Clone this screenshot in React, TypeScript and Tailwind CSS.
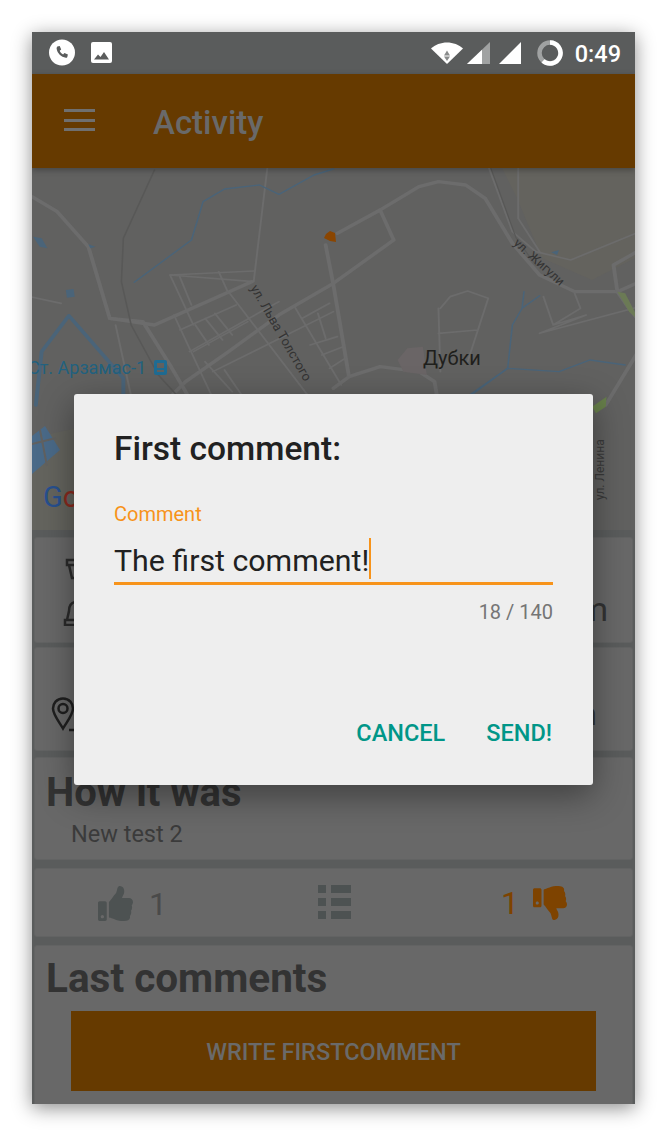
import React from "react";
import { FaThumbsUp, FaThumbsDown } from "react-icons/fa";

const StatusBar: React.FC = () => {
  return (
    <div className="h-[42px] bg-[#5a5c5c] flex items-center justify-between pl-[17px] pr-[14px] text-white">
      <div className="flex items-center gap-[16px] -mt-[1px]">
        <svg width="26" height="27" viewBox="0 0 26 27">
          <circle cx="13" cy="13.5" r="13" fill="#fff" />
          <path
            d="M8.3 7.5l2.4-.6 1.5 3.6-1.5 1.2c.7 1.6 1.9 2.9 3.4 3.7l1.3-1.5 3.5 1.6-.6 2.4c-.2.6-.7 1-1.4.9-4.8-.6-8.6-4.4-9.3-9.2-.1-.8.3-1.4.7-2.1z"
            fill="#5a5c5c"
          />
        </svg>
        <svg width="21" height="21" viewBox="0 0 21 21">
          <rect width="21" height="21" rx="2" fill="#fff" />
          <path d="M3 17.5l4-5 2.5 2.5 3.5-5 5 7.5z" fill="#5a5c5c" />
        </svg>
      </div>
      <div className="flex items-center">
        <svg width="32" height="22" viewBox="0 0 32 22">
          <path d="M0 6.5C4 2.8 10 .5 16 .5s12 2.3 16 6L16 22z" fill="#fff" />
          <path d="M16 8.5l3 5h-6z M13 14.5h6l-3 4.5z" fill="#8a8c8c" />
        </svg>
        <svg className="ml-[4px]" width="23" height="22" viewBox="0 0 23 22">
          <path d="M0 22L23 0v22z" fill="#a0a2a2" />
          <path d="M0 22l15-14.300v14.300z" fill="#fff" />
        </svg>
        <svg className="ml-[9px]" width="22" height="22" viewBox="0 0 22 22">
          <path d="M0 22L22 0v22z" fill="#fff" />
        </svg>
        <svg className="ml-[16px]" width="26" height="26" viewBox="0 0 26 26">
          <circle cx="13" cy="13" r="10.500" fill="none" stroke="#a0a2a2" strokeWidth="4.500" />
          <path d="M13 2.500A10.500 10.500 0 1 1 6 20.800" fill="none" stroke="#fff" strokeWidth="4.500" />
        </svg>
        <span className="ml-[12px] mt-[3px] text-[23.500px] leading-none font-medium">0:49</span>
      </div>
    </div>
  );
};

const Toolbar: React.FC = () => {
  return (
    <div className="relative z-10 h-[94px] bg-[#663a00] flex items-center pl-[32px] shadow-[0_2px_6px_rgba(0,0,0,0.3)]">
      <div className="w-[31px] flex flex-col gap-[6.500px] -mt-[2px]">
        <div className="h-[3px] bg-[#6f6f6f]" />
        <div className="h-[3px] bg-[#6f6f6f]" />
        <div className="h-[3px] bg-[#6f6f6f]" />
      </div>
      <span className="ml-[58px] mt-[3px] text-[33px] leading-none font-medium text-[#696969]">Activity</span>
    </div>
  );
};

const MapView: React.FC = () => {
  return (
    <svg className="block" width="603" height="362" viewBox="0 0 603 362">
      <rect width="603" height="362" fill="#616160" />
      <path d="M0 270L45 260 80 300 92 362H0z" fill="#64645e" />
      <path d="M470 0H603V90L560 112 510 90 485 30z" fill="#64635e" />
      <g
        transform="translate(-2 -3) scale(0.389 0.3333)"
        fill="none"
        stroke="#6c6c6c"
        strokeLinejoin="round"
        strokeLinecap="round"
      >
        <g strokeWidth="10">
          <path d="M790 205L900 135 1000 65 1050 50 1120 60 1170 100 1240 235 1310 330 1400 380 1510 380 1568 350" />
          <path d="M900 135L935 225 780 355 640 450 510 560 400 650 340 720" />
          <path d="M5 95L70 140 150 245 205 460 290 470 360 600 420 720" />
          <path d="M205 460L320 480 570 350" />
          <path d="M760 240L780 360 820 635 780 670" />
          <path d="M820 635L900 605 1000 620 1040 650 1050 720" />
          <path d="M1510 380L1500 300 1568 255" />
          <path d="M1510 380L1540 430 1568 470" />
          <path d="M1568 550L1480 720" />
        </g>
        <g strokeWidth="5">
          <path d="M610 10L575 350 360 330 420 480" />
          <path d="M360 330L575 318" />
          <path d="M485 320L510 385" />
          <path d="M385 335L415 420" />
          <path d="M510 380L720 700" />
          <path d="M370 450L470 700" />
          <path d="M385 495L530 420 M420 560L560 470" />
          <path d="M425 480L460 540 M450 460L495 525 M475 445L520 510" />
          <path d="M410 560L640 410" />
          <path d="M450 590L520 680 M500 615L550 700" />
          <path d="M680 425L800 660 M700 460L770 415 M740 445L760 520 M720 540L790 515 M750 570L805 545 M770 610L810 580" />
          <path d="M470 620L780 440" />
          <path d="M1055 430L1080 395 1125 378 1178 400 1125 590 M1050 505L1150 495 M1050 430L1055 620" />
          <path d="M1320 395L1345 480 1415 430 1400 385 M1345 480L1430 450 1310 505 1568 425" />
          <path d="M1180 10L1240 200 1300 260 1390 285 1568 200" />
          <path d="M1255 10V160L1310 260" />
          <path d="M0 395L80 415" />
          <path d="M220 480L265 720" />
        </g>
        <path d="M320 15L240 220 235 350 260 480 330 630 400 720" stroke="#585857" strokeWidth="4" />
        <path d="M1185 10L1250 220 1300 300" stroke="#585857" strokeWidth="3" />
        <g stroke="#4a6479" strokeWidth="4">
          <path d="M780 12L730 30 640 88 590 60 500 72 445 110 415 225 268 352" />
          <path d="M15 720L30 560 100 452 240 640 240 720" strokeWidth="10" />
          <path d="M1270 380L1265 430 1310 392 M1265 430L1240 480 1228 610 1130 690 M1228 610L1360 620 1440 585 1530 600" />
          <path d="M1100 720L1228 610" />
        </g>
        <g fill="#4a6479" stroke="none">
          <path d="M8 215L30 220 45 250 25 245z" />
          <path d="M92 375L112 372 115 395 95 398z" />
          <path d="M150 238L168 245 155 250z" />
          <path d="M1340 262L1360 255 1355 270z" />
        </g>
        <path d="M1510 380L1530 385 1568 470 1540 440z" fill="#6b7a55" stroke="none" />
        <path d="M945 585L970 550 1010 545 1020 630 960 620z" fill="#6a6566" stroke="none" />
        <path d="M1445 725L1482 695 1480 725 1455 745z" fill="#677f4a" stroke="none" />
      </g>
      <path d="M294 66l4-3 5 2 1 9-6-1-6-3z" fill="#8a4500" />
      <path d="M0 268L13 258 28 282 0 306z" fill="#4a6a88" />
      <g stroke="#616160" strokeWidth="2">
        <path d="M0 276L24 270 M8 262L15 298" />
      </g>
      <text x="391" y="197" fontSize="20" fill="#1f1f1c">Дубки</text>
      <text x="-4" y="206" fontSize="18" fill="#22617f">Ст. Арзамас-1</text>
      <rect x="122" y="192" width="13" height="15" rx="2" fill="#1f6c93" />
      <rect x="125" y="195" width="7" height="5" fill="#616160" />
      <rect x="125" y="202" width="7" height="2" fill="#616160" />
      <text transform="translate(218 120) rotate(60)" fontSize="13" fill="#333">ул. Льва Толстого</text>
      <text transform="translate(481 76) rotate(42)" fontSize="12.500" fill="#333">ул. Жигули</text>
      <text transform="translate(297 228) rotate(60)" fontSize="13" fill="#333">а</text>
      <text transform="translate(572 332) rotate(-90)" fontSize="12" fill="#3a3a3a">ул. Ленина</text>
      <text x="11" y="339" fontSize="29" fill="#27508f">
        G<tspan fill="#8a2a1e">o</tspan>
      </text>
    </svg>
  );
};

const Card: React.FC<{ className: string; children?: React.ReactNode }> = ({ className, children }) => {
  return (
    <div className={"relative mx-[2px] rounded-[3px] bg-[#686868] border border-[#626363] " + className}>
      {children}
    </div>
  );
};

const CommentDialog: React.FC = () => {
  return (
    <div className="absolute left-[42px] top-[362px] z-20 w-[519px] h-[391px] rounded-[3px] bg-[#eeeeee] shadow-[0_10px_34px_rgba(0,0,0,0.4)] px-[40px] flex flex-col">
      <h2 className="mt-[36px] text-[33.500px] leading-[38px] font-medium text-[#212121]">First comment:</h2>
      <label className="mt-[34px] text-[20px] leading-[24px] text-[#f7931a]">Comment</label>
      <div className="mt-[12px] h-[47px] border-b-[3px] border-[#f7931a] flex items-end">
        <span className="mb-[2px] text-[30.300px] leading-[39px] text-[#212121]">The first comment!</span>
        <span className="w-[2px] h-[41px] bg-[#f7931a] mb-[3px]" />
      </div>
      <div className="mt-[15px] text-right text-[20px] leading-[24px] text-[#757575]">18 / 140</div>
      <div className="mt-auto mb-[38px] mr-[1px] flex justify-end gap-[41px] text-[23.500px] leading-[28px] font-medium text-[#009688]">
        <span>CANCEL</span>
        <span>SEND!</span>
      </div>
    </div>
  );
};

export default function App() {
  return (
    <div className="w-[667px] h-[1137px] bg-white pt-[32px] pl-[32px] [font-family:Roboto,'Liberation_Sans',sans-serif]">
      <div className="relative w-[603px] h-[1072px] overflow-hidden bg-[#5a5c5c] shadow-[0_4px_18px_rgba(0,0,0,0.45)]">
        <StatusBar />
        <Toolbar />
        <MapView />
        <div className="mt-[7px] flex flex-col gap-[5px]">
          <Card className="h-[106px] mb-[-1px]">
            <svg className="absolute left-[28px] top-[20px]" width="26" height="68" viewBox="0 0 26 68" fill="none" stroke="#2b2b2b" strokeWidth="2.500">
              <path d="M4 2h14v5H4z M6 7l3 13h9l3-13" />
              <path d="M12 44c-5 1-6 5-6 9l-2 9h20l-2-9c0-4-1-8-6-9z M2 62h22v5H2z" />
            </svg>
            <span className="absolute right-[24px] top-[54px] text-[34px] leading-none text-[#333]">m</span>
          </Card>
          <Card className="h-[104px]">
            <svg className="absolute left-[16px] top-[49px]" width="30" height="38" viewBox="0 0 30 38" fill="none" stroke="#1f1f1f" strokeWidth="2.500">
              <path d="M12 1.500C5.500 1.500 2 6.500 2 11.500c0 6 6 13 10 20 4-7 10-14 10-20 0-5-3.500-10-10-10z" />
              <circle cx="12" cy="11.500" r="4.500" />
              <path d="M18 33h12" />
            </svg>
            <span className="absolute right-[35px] top-[50px] text-[32px] leading-none text-[#333]">n</span>
          </Card>
          <Card className="h-[103px] mt-[1px]">
            <h3 className="absolute left-[11px] top-[14px] text-[40px] leading-[42px] font-bold text-[#333333]">How it was</h3>
            <p className="absolute left-[36px] top-[62px] text-[23.500px] leading-[28px] text-[#3b3b3b]">New test 2</p>
          </Card>
          <Card className="h-[69px] mt-[3px] flex items-center">
            <div className="absolute left-[63px] top-[17px] flex items-center gap-[16px]">
              <FaThumbsUp className="text-[#4d5252] text-[35px]" />
              <span className="text-[32px] leading-none text-[#4a4a4a]">1</span>
            </div>
            <svg className="absolute left-[283px] top-[16px]" width="33" height="34" viewBox="0 0 33 34" fill="#4d5252">
              <path d="M0 0h8v8H0z M13 0h20v8H13z M0 13h8v8H0z M13 13h20v8H13z M0 26h8v8H0z M13 26h20v8H13z" />
            </svg>
            <div className="absolute left-[466px] top-[17px] flex items-center gap-[14px]">
              <span className="text-[32px] leading-none text-[#7e4300]">1</span>
              <FaThumbsDown className="text-[#7e4300] text-[34px]" />
            </div>
          </Card>
          <Card className="h-[162px] mt-[3px] pt-[11px]">
            <h3 className="ml-[11px] text-[40.500px] leading-[42px] font-bold text-[#333333]">Last comments</h3>
            <div className="mt-[12px] mx-[36px] h-[80px] pt-[4px] bg-[#663a00] flex items-center justify-center text-[23.500px] font-medium text-[#6a6a6a]">
              WRITE FIRSTCOMMENT
            </div>
          </Card>
        </div>
        <CommentDialog />
      </div>
    </div>
  );
}
